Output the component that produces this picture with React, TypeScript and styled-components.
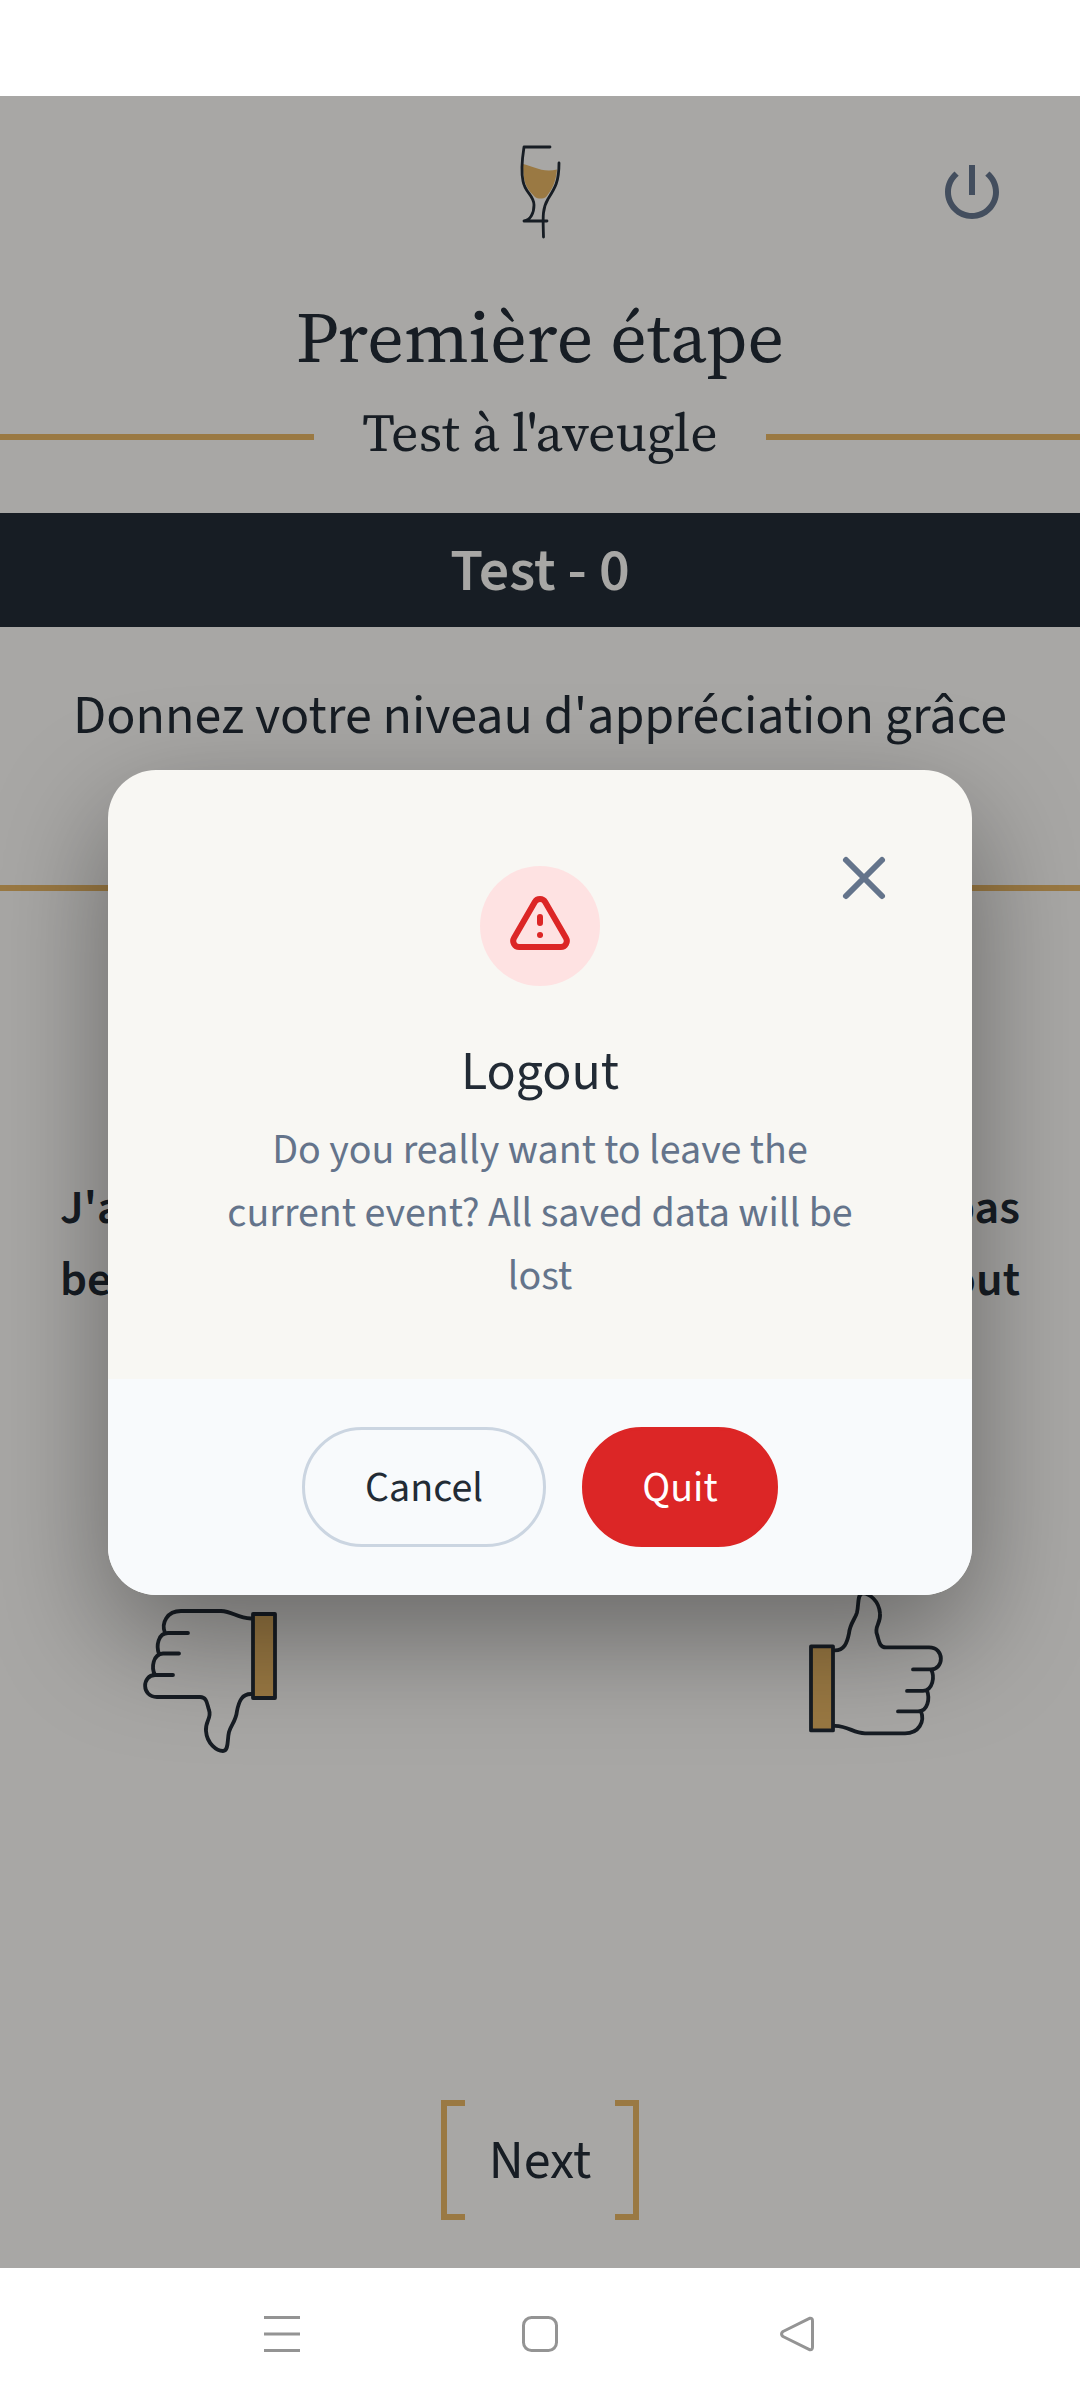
import React from "react";
import styled, { createGlobalStyle } from "styled-components";

const colors = {
  paper: "#f8f7f3",
  ink: "#222b35",
  gold: "#e4b363",
  slate: "#64748b",
  danger: "#dc2626",
};

const sans = `"Source Sans 3", "Source Sans Pro", "Noto Sans CJK SC", "Noto Sans", sans-serif`;
const serif = `"Source Serif 4", "Source Serif Pro", "Noto Serif CJK SC", "Liberation Serif", serif`;

const GlobalStyle = createGlobalStyle`
  * { box-sizing: border-box; }
  body { margin: 0; background: #fff; }
  h1, h2, p { margin: 0; font-weight: 400; }
  button { font: inherit; cursor: pointer; }
`;

const Phone = styled.div`
  width: 1080px;
  height: 2400px;
  display: flex;
  flex-direction: column;
  background: #fff;
  font-family: ${sans};
  color: ${colors.ink};
`;

const StatusBar = styled.div`
  height: 96px;
`;

const Screen = styled.main`
  position: relative;
  height: 2172px;
  overflow: hidden;
  background: ${colors.paper};
  display: flex;
  flex-direction: column;
`;

const Header = styled.header`
  height: 192px;
  display: grid;
  grid-template-columns: 1fr 120px 1fr;
  align-items: center;
  padding: 0 72px;
`;

const HeaderEnd = styled.div`
  grid-column: 3;
  justify-self: end;
  display: flex;
`;

const Logo = styled.svg`
  grid-column: 2;
  width: 120px;
  height: 130px;
  margin-top: -14px;
`;

const Title = styled.h1`
  height: 96px;
  line-height: 97px;
  font-family: ${serif};
  font-size: 72px;
  text-align: center;
  white-space: nowrap;
`;

const SubtitleRow = styled.div`
  height: 129px;
  display: flex;
  align-items: center;
  justify-content: space-between;
  padding-bottom: 23px;
`;

const Rule = styled.div<{ $width: string }>`
  width: ${(p) => p.$width};
  height: 6px;
  flex: none;
  background: ${colors.gold};
`;

const Subtitle = styled.h2`
  margin-bottom: 10px;
  font-family: ${serif};
  font-size: 54px;
  line-height: 80px;
  white-space: nowrap;
`;

const Banner = styled.div`
  height: 114px;
  padding-top: 2px;
  display: flex;
  align-items: center;
  justify-content: center;
  background: ${colors.ink};
  color: ${colors.paper};
  font-size: 60px;
  font-weight: 600;
`;

const Prompt = styled.p`
  margin: 48px 0 126px;
  font-size: 54px;
  line-height: 84px;
  text-align: center;
  white-space: nowrap;
`;

const Labels = styled.div`
  height: 144px;
  margin-top: 281px;
  padding: 0 60px;
  display: flex;
  justify-content: space-between;
  font-size: 48px;
  line-height: 72px;
  font-weight: 600;
`;

const Label = styled.div<{ $align: "left" | "right" }>`
  width: 240px;
  text-align: ${(p) => p.$align};
`;

const Thumbs = styled.div`
  height: 190px;
  margin-top: 264px;
  padding: 0 120px 0 130px;
  display: flex;
  justify-content: space-between;
`;

const ThumbSvg = styled.svg`
  width: 170px;
  height: 190px;
  fill: none;
  stroke: ${colors.ink};
  stroke-width: 3.8;
  stroke-linecap: round;
  stroke-linejoin: round;
`;

const NextButton = styled.button`
  width: 198px;
  height: 120px;
  margin: 330px auto 0;
  padding: 0;
  border: 0;
  background: none;
  color: ${colors.ink};
  font-size: 54px;
  line-height: 84px;
  display: flex;
  justify-content: space-between;
  align-items: center;
`;

const NextLabel = styled.span`
  padding-top: 4px;
`;

const Bracket = styled.span<{ $side: "left" | "right" }>`
  width: 24px;
  height: 120px;
  border: 6px solid ${colors.gold};
  border-${(p) => (p.$side === "left" ? "right" : "left")}: 0;
`;

const Scrim = styled.div`
  position: absolute;
  inset: 0;
  display: flex;
  justify-content: center;
  align-items: flex-start;
  padding-top: 674px;
  background: rgba(0, 0, 0, 0.32);
`;

const Dialog = styled.section`
  position: relative;
  width: 864px;
  height: 825px;
  border-radius: 48px;
  overflow: hidden;
  display: flex;
  flex-direction: column;
  background: ${colors.paper};
  box-shadow: 0 42px 116px rgba(0, 0, 0, 0.38);
`;

const DialogBody = styled.div`
  height: 609px;
  padding: 96px 108px 0;
  display: flex;
  flex-direction: column;
  align-items: center;
  text-align: center;
`;

const AlertBadge = styled.div`
  width: 120px;
  height: 120px;
  flex: none;
  border-radius: 50%;
  display: grid;
  place-items: center;
  background: #fee2e2;
  color: ${colors.danger};
`;

const CloseButton = styled.button`
  position: absolute;
  top: 72px;
  right: 72px;
  width: 72px;
  height: 72px;
  padding: 0;
  border: 0;
  background: none;
  color: ${colors.slate};
`;

const LineIcon = styled.svg`
  display: block;
  width: 72px;
  height: 72px;
  fill: none;
  stroke: currentColor;
  stroke-width: 2;
  stroke-linecap: round;
  stroke-linejoin: round;
`;

const PowerIcon = styled.svg`
  width: 72px;
  height: 72px;
  fill: ${colors.slate};
`;

const DialogTitle = styled.h2`
  margin-top: 51px;
  font-size: 54px;
  line-height: 72px;
`;

const DialogText = styled.p`
  margin-top: 10px;
  font-size: 42px;
  line-height: 63px;
  color: ${colors.slate};
  white-space: nowrap;
`;

const DialogFooter = styled.footer`
  height: 216px;
  display: flex;
  align-items: center;
  justify-content: center;
  gap: 36px;
  background: #f8fafc;
`;

const Pill = styled.button<{ $danger?: boolean }>`
  width: ${(p) => (p.$danger ? 196 : 244)}px;
  height: 120px;
  padding: 1px 0 0;
  border-radius: 60px;
  border: 3px solid ${(p) => (p.$danger ? colors.danger : "#cbd5e1")};
  background: ${(p) => (p.$danger ? colors.danger : "transparent")};
  color: ${(p) => (p.$danger ? "#fff" : colors.ink)};
  font-size: 42px;
`;

const NavBar = styled.nav`
  height: 132px;
  display: grid;
  grid-template-columns: repeat(3, 258px);
  justify-content: center;
  align-items: center;
  justify-items: center;
`;

const NavIcon = styled.svg`
  width: 36px;
  height: 36px;
  fill: none;
  stroke: #949494;
  stroke-width: 3;
  stroke-linejoin: round;
`;

const FistPath =
  "M121 38.5 C107 38 103 31.5 91 31 L51 31 C37 31 31 43 35 53 M58 53 H38 C28 53 26 66 29 74 M49 73.5 H33 C23 74 21 88 25 95 M43 95 H25 C12 95 11 117 27 117 L70 117 C77 117 77 124 79 130 C82 138 75 141 76 151 C77 164 87 171 93 171 C99 171 97 160 99 152 C101 145 106 141 107 131 C109 121 112 114 121 114";

function ThumbDown() {
  return (
    <ThumbSvg viewBox="0 0 170 190">
      <path d={FistPath} />
      <rect x="123" y="34" width="22" height="84" fill={colors.gold} />
    </ThumbSvg>
  );
}

function ThumbUp() {
  return (
    <ThumbSvg viewBox="0 0 170 190">
      <g transform="rotate(180 83 92.2)">
        <path d={FistPath} />
        <rect x="123" y="34" width="22" height="84" fill={colors.gold} />
      </g>
    </ThumbSvg>
  );
}

export default function App() {
  return (
    <Phone>
      <GlobalStyle />
      <StatusBar />
      <Screen>
        <Header>
          <Logo viewBox="0 0 120 130" fill="none">
            <path
              d="M43 44 C53 46 62 53 77 49.5 C76 62 72 70 66 77 C63 79 58 79 55 77 C47 69 43 64 43 44Z"
              fill={colors.gold}
            />
            <path
              d="M70 27 H44 C42 40 41 52 43 61 C45 73 54 75 54 85 C54 94 50 100 44 101 H67 M79 43 C79 62 75 68 68 79 C62 89 63 98 63.5 117"
              stroke={colors.ink}
              strokeWidth="2.8"
              strokeLinecap="round"
              strokeLinejoin="round"
            />
          </Logo>
          <HeaderEnd>
            <PowerIcon viewBox="0 0 24 24">
              <path d="M13 3h-2v10h2V3zm4.83 2.17-1.42 1.42C17.99 7.86 19 9.81 19 12c0 3.87-3.13 7-7 7s-7-3.13-7-7c0-2.19 1.01-4.14 2.58-5.42L6.17 5.17C4.23 6.82 3 9.26 3 12c0 4.97 4.03 9 9 9s9-4.03 9-9c0-2.74-1.23-5.18-3.17-6.83z" />
            </PowerIcon>
          </HeaderEnd>
        </Header>
        <Title>Première étape</Title>
        <SubtitleRow>
          <Rule $width="314px" />
          <Subtitle>Test à l'aveugle</Subtitle>
          <Rule $width="314px" />
        </SubtitleRow>
        <Banner>Test - 0</Banner>
        <Prompt>Donnez votre niveau d'appréciation grâce</Prompt>
        <Rule $width="100%" />
        <Labels>
          <Label $align="left">
            J'aime
            <br />
            beaucoup
          </Label>
          <Label $align="right">
            pas
            <br />
            du tout
          </Label>
        </Labels>
        <Thumbs>
          <ThumbDown />
          <ThumbUp />
        </Thumbs>
        <NextButton>
          <Bracket $side="left" />
          <NextLabel>Next</NextLabel>
          <Bracket $side="right" />
        </NextButton>
        <Scrim>
          <Dialog role="dialog">
            <DialogBody>
              <AlertBadge>
                <LineIcon viewBox="0 0 24 24">
                  <path d="M12 9v2m0 4h.01m-6.938 4h13.856c1.54 0 2.502-1.667 1.732-3L13.732 4c-.77-1.333-2.694-1.333-3.464 0L3.34 16c-.77 1.333.192 3 1.732 3z" />
                </LineIcon>
              </AlertBadge>
              <DialogTitle>Logout</DialogTitle>
              <DialogText>
                Do you really want to leave the
                <br />
                current event? All saved data will be
                <br />
                lost
              </DialogText>
            </DialogBody>
            <DialogFooter>
              <Pill>Cancel</Pill>
              <Pill $danger>Quit</Pill>
            </DialogFooter>
            <CloseButton aria-label="Close">
              <LineIcon viewBox="0 0 24 24">
                <path d="M6 18L18 6M6 6l12 12" />
              </LineIcon>
            </CloseButton>
          </Dialog>
        </Scrim>
      </Screen>
      <NavBar>
        <NavIcon viewBox="0 0 36 36">
          <path d="M0 1.5H36M0 18H36M0 34.5H36" />
        </NavIcon>
        <NavIcon viewBox="0 0 36 36">
          <rect x="1.5" y="1.5" width="33" height="33" rx="8" />
        </NavIcon>
        <NavIcon viewBox="0 0 36 36">
          <path d="M30 2.2 L3 15.5 Q0 18 3 20.5 L30 33.8 Q32.5 34 32.5 31 V5 Q32.5 2 30 2.2Z" />
        </NavIcon>
      </NavBar>
    </Phone>
  );
}
